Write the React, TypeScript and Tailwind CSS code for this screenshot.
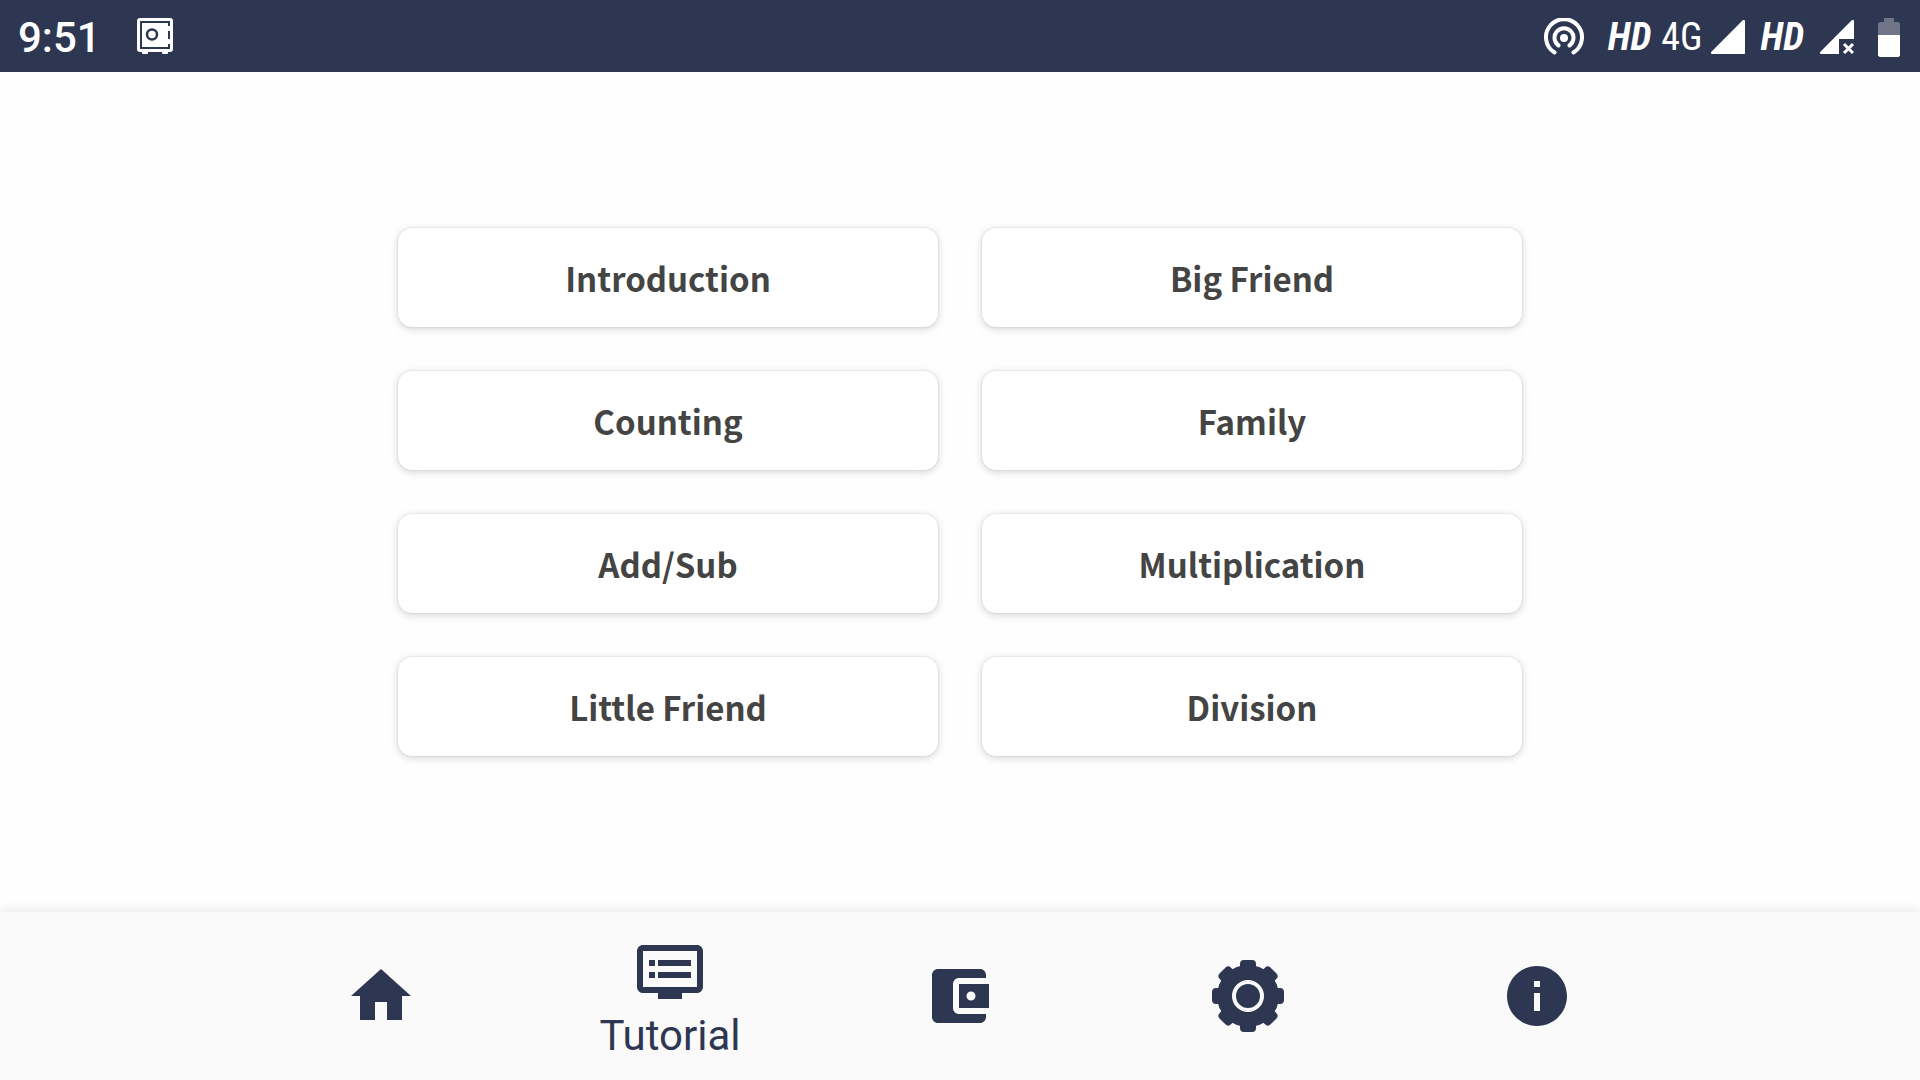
import React, { useState } from "react";

type IconProps = {
  className?: string;
};

function SafeIcon({ className }: IconProps) {
  return (
    <svg className={className} viewBox="0 0 36 36" fill="none" aria-hidden="true">
      <rect width="36" height="34" rx="3" fill="#fff" />
      <rect x="5" y="32" width="6" height="4" rx="1" fill="#fff" />
      <rect x="25" y="32" width="6" height="4" rx="1" fill="#fff" />
      <path d="M32 8V4H4v26h28v-4M32 13v8" stroke="#2e3752" strokeWidth="2" />
      <circle cx="15" cy="16.500" r="5" stroke="#2e3752" strokeWidth="2.500" />
    </svg>
  );
}

function HotspotIcon({ className }: IconProps) {
  return (
    <svg className={className} viewBox="0 0 40 38" fill="none" aria-hidden="true">
      <circle cx="20" cy="20" r="4" fill="#fff" />
      <path
        d="M14.500 27.500a9.500 9.500 0 1 1 11 0M10.500 34.500a18 18 0 1 1 19 0"
        stroke="#fff"
        strokeWidth="4"
        strokeLinecap="round"
      />
    </svg>
  );
}

function SignalIcon({ className }: IconProps) {
  return (
    <svg className={className} viewBox="0 0 34 34" fill="#fff" aria-hidden="true">
      <path d="M34 1v32.500l-.5.500H1c-1 0-1.400-1.400-.6-2.200L31.500.5C32.500-.3 34 0 34 1Z" />
    </svg>
  );
}

function NoSignalIcon({ className }: IconProps) {
  return (
    <svg className={className} viewBox="0 0 34 34" fill="#fff" aria-hidden="true">
      <path d="M34 1v18H19v15H1c-1 0-1.400-1.400-.6-2.200L31.500.5C32.500-.3 34 0 34 1Z" />
      <path d="m24 24 9 9m0-9-9 9" stroke="#fff" strokeWidth="3" />
    </svg>
  );
}

function BatteryIcon({ className }: IconProps) {
  return (
    <svg className={className} viewBox="0 0 22 39" aria-hidden="true">
      <path d="M6 0h10v4h4.500L22 5.500V17H0V5.500L1.500 4H6Z" fill="#6f7488" />
      <path d="M0 17h22v20.500L20.500 39h-19L0 37.500Z" fill="#fff" />
    </svg>
  );
}

function HomeIcon({ className }: IconProps) {
  return (
    <svg className={className} viewBox="0 0 24 24" fill="currentColor" aria-hidden="true">
      <path d="M10 20v-6h4v6h5v-8h3L12 3 2 12h3v8z" />
    </svg>
  );
}

function TutorialIcon({ className }: IconProps) {
  return (
    <svg className={className} viewBox="0 0 24 24" fill="currentColor" aria-hidden="true">
      <path d="M21 3H3c-1.100 0-2 .9-2 2v12c0 1.100.9 2 2 2h5v2h8v-2h5c1.100 0 1.990-.9 1.990-2L23 5c0-1.100-.9-2-2-2zm0 14H3V5h18v12zm-2-9H8v2h11V8zm0 4H8v2h11v-2zM7 8H5v2h2V8zm0 4H5v2h2v-2z" />
    </svg>
  );
}

function WalletIcon({ className }: IconProps) {
  return (
    <svg className={className} viewBox="0 0 24 24" fill="currentColor" aria-hidden="true">
      <path d="M21 18v1c0 1.100-.9 2-2 2H5c-1.110 0-2-.9-2-2V5c0-1.100.89-2 2-2h14c1.100 0 2 .9 2 2v1h-9c-1.110 0-2 .9-2 2v8c0 1.100.89 2 2 2h9zm-9-2h10V8H12v8zm4-2.500c-.83 0-1.500-.67-1.500-1.500s.67-1.500 1.500-1.500 1.500.67 1.500 1.500-.67 1.500-1.500 1.500z" />
    </svg>
  );
}

const TEETH = [0, 45, 90, 135, 180, 225, 270, 315];

function SettingsIcon({ className }: IconProps) {
  return (
    <svg className={className} viewBox="0 0 72 72" fill="currentColor" aria-hidden="true">
      <circle cx="36" cy="36" r="31" />
      {TEETH.map((angle) => (
        <rect
          key={angle}
          x="28"
          y="0"
          width="16"
          height="14"
          rx="4"
          transform={`rotate(${angle} 36 36)`}
        />
      ))}
      <circle cx="36" cy="36" r="14" fill="none" stroke="#fafafa" strokeWidth="4" />
    </svg>
  );
}

function InfoIcon({ className }: IconProps) {
  return (
    <svg className={className} viewBox="0 0 24 24" fill="currentColor" aria-hidden="true">
      <path d="M12 2C6.480 2 2 6.480 2 12s4.480 10 10 10 10-4.480 10-10S17.520 2 12 2zm1 15h-2v-6h2v6zm0-8h-2V7h2v2z" />
    </svg>
  );
}

const LESSONS = [
  "Introduction",
  "Big Friend",
  "Counting",
  "Family",
  "Add/Sub",
  "Multiplication",
  "Little Friend",
  "Division",
];

const TABS = [
  { label: "Home", Icon: HomeIcon },
  { label: "Tutorial", Icon: TutorialIcon },
  { label: "Wallet", Icon: WalletIcon },
  { label: "Settings", Icon: SettingsIcon },
  { label: "Info", Icon: InfoIcon },
];

function StatusBar() {
  return (
    <header className="flex h-[72px] items-center justify-between bg-[#2e3752] pl-[18px] pr-5 text-white">
      <div className="flex items-center gap-9">
        <span className="pt-1 font-['Roboto',sans-serif] text-[42px] leading-[48px] font-medium">
          9:51
        </span>
        <SafeIcon className="size-9" />
      </div>

      <div className="flex items-center pt-0.5 font-['Roboto_Condensed','Liberation_Sans_Narrow',sans-serif] text-[38px] leading-[48px]">
        <HotspotIcon className="mr-6 h-[38px] w-10" />
        <span className="mr-2.5 font-bold italic">HD</span>
        <span className="mr-2">4G</span>
        <SignalIcon className="mr-4 size-[34px]" />
        <span className="mr-4 font-bold italic">HD</span>
        <NoSignalIcon className="mr-6 size-[34px]" />
        <BatteryIcon className="h-[39px] w-[22px]" />
      </div>
    </header>
  );
}

export default function App() {
  const [active, setActive] = useState("Tutorial");

  return (
    <div className="flex min-h-screen flex-col bg-[#fefefe]">
      <StatusBar />

      <main className="flex flex-1 items-center justify-center px-6">
        <div className="grid w-full max-w-[1124px] grid-cols-2 gap-11">
          {LESSONS.map((lesson) => (
            <button
              key={lesson}
              type="button"
              className="h-[99px] rounded-[14px] bg-white font-['Noto_Sans_CJK_SC',sans-serif] text-[33px] leading-[48px] font-bold text-[#444444] shadow-[0_2px_8px_rgba(0,0,0,0.16),0_0_2px_rgba(0,0,0,0.16)]"
            >
              {lesson}
            </button>
          ))}
        </div>
      </main>

      <nav className="flex h-[168px] justify-center bg-[#fafafa] pr-0.5 text-[#2e3752] shadow-[0_0_12px_rgba(0,0,0,0.12)]">
        <div className="grid w-full max-w-[1445px] grid-cols-5">
          {TABS.map(({ label, Icon }) => (
            <button
              key={label}
              type="button"
              aria-label={label}
              onClick={() => setActive(label)}
              className={
                active === label
                  ? "flex flex-col items-center justify-center pt-2"
                  : "flex flex-col items-center justify-center"
              }
            >
              <Icon className="size-[72px]" />
              {active === label && (
                <span className="font-['Roboto',sans-serif] text-[42px] leading-[56px]">
                  {label}
                </span>
              )}
            </button>
          ))}
        </div>
      </nav>
    </div>
  );
}
